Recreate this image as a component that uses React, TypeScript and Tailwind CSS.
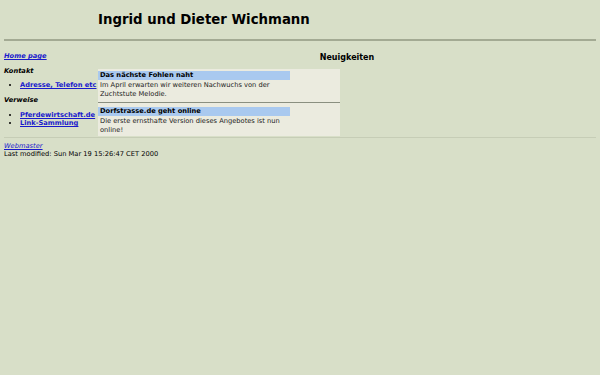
const font = { fontFamily: '"DejaVu Sans", Verdana, sans-serif' };

function NewsItem({ title, children, last }: { title: string; children: React.ReactNode; last?: boolean }) {
  return (
    <div className={last ? "pt-[4px]" : "border-b border-[#8a8f80] pt-[2px] pb-[4px]"}>
      <div className="h-[9px] w-[192px] bg-[#a9c9ef] px-[2px] text-[6.7px] font-bold leading-[9px] text-black">{title}</div>
      <div className="px-[2px] pt-[1px] text-[6.7px] leading-[8.5px] text-[#1c1c1c]">{children}</div>
    </div>
  );
}

export default function App() {
  return (
    <div className="h-[375px] w-[600px] bg-[#d8dfc8] px-[4px] text-black" style={font}>
      <div className="flex h-[39px] items-center pl-[94px]">
        <h1 className="text-[13.3px] font-bold leading-none">Ingrid und Dieter Wichmann</h1>
      </div>
      <div className="h-[2px] bg-[#a3aa93]" />
      <div className="flex border-b border-[#c6cdb6] pb-[1px]">
        <div className="w-[94px] shrink-0 pt-[11px] text-[6.7px] leading-[8px]">
          <a href="#" className="font-bold italic text-[#1a1acc] underline">Home page</a>
          <div className="mt-[7px] font-bold italic">Kontakt</div>
          <ul className="mt-[6px] list-disc pl-[16px]">
            <li><a href="#" className="font-bold text-[#1a1acc] underline whitespace-nowrap">Adresse, Telefon etc</a></li>
          </ul>
          <div className="mt-[7px] font-bold italic">Verweise</div>
          <ul className="mt-[7px] list-disc pl-[16px]">
            <li><a href="#" className="font-bold text-[#1a1acc] underline whitespace-nowrap">Pferdewirtschaft.de</a></li>
            <li><a href="#" className="font-bold text-[#1a1acc] underline">Link-Sammlung</a></li>
          </ul>
        </div>
        <div className="flex-1 pt-[11px]">
          <div className="text-center text-[8px] font-bold leading-[11px]">Neuigkeiten</div>
          <div className="mt-[6px] w-[242px] bg-[#ebebdf] pb-[2px]">
            <NewsItem title="Das nächste Fohlen naht">
              Im April erwarten wir weiteren Nachwuchs von der<br />Zuchtstute Melodie.
            </NewsItem>
            <NewsItem title="Dorfstrasse.de geht online" last>
              Die erste ernsthafte Version dieses Angebotes ist nun<br />online!
            </NewsItem>
          </div>
        </div>
      </div>
      <div className="pt-[4px] text-[6.7px] leading-[8px]">
        <a href="#" className="italic text-[#1a1acc] underline">Webmaster</a>
        <div>Last modified: Sun Mar 19 15:26:47 CET 2000</div>
      </div>
    </div>
  );
}
